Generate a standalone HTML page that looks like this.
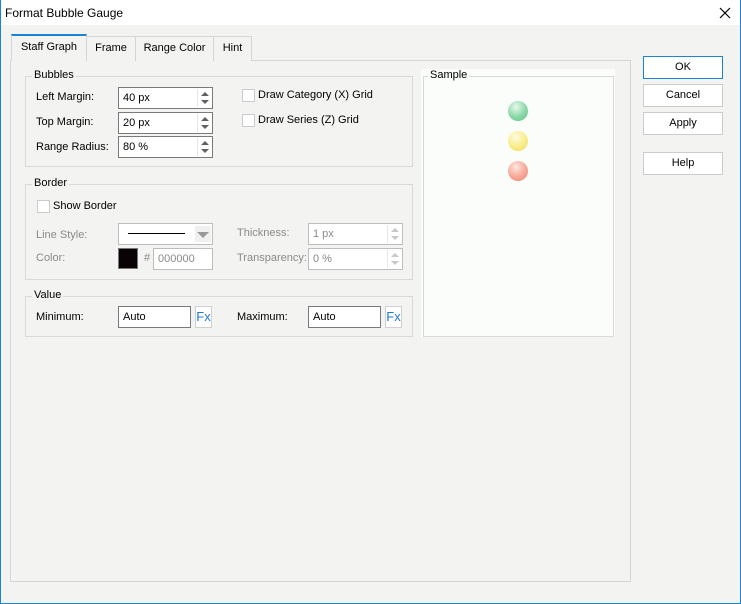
<!DOCTYPE html><html><head><style>
*{box-sizing:border-box}
body{margin:0;width:741px;height:604px;overflow:hidden;font-family:"Liberation Sans",sans-serif;font-size:11px;color:#000}
#win{position:absolute;left:0;top:0;width:741px;height:604px;background:#f3f4f2}
#bd{position:absolute;left:0;top:0;width:741px;height:604px;border:1px solid #1883d7;border-top:none}
.a{position:absolute}
.title{left:0;top:0;width:741px;height:25px;background:#fff}
.tab{position:absolute;top:36px;height:25px;border:1px solid #d6d6d6;border-bottom:none;background:#f3f4f2;text-align:center;line-height:23px}
.grp{position:absolute;border:1px solid #d9d9d9}
.grp>span{position:absolute;top:-8px;left:6px;background:#f3f4f2;padding:0 2px}
.in{position:absolute;height:22px;background:#fff;border:1px solid #7a7a7a;padding-left:4px;line-height:20px}
.dis{border-color:#bdbdbd;color:#8a8a8a}
.spin{position:absolute;right:1px;top:1px;width:14px;height:18px;border-left:1px solid #e6e6e6}
.spin:before,.spin:after{content:"";position:absolute;left:3px;border-left:4px solid transparent;border-right:4px solid transparent}
.spin:before{top:3px;border-bottom:4px solid #606060}
.spin:after{bottom:3px;border-top:4px solid #606060}
.dis .spin:before{border-bottom-color:#c8c8c8}.dis .spin:after{border-top-color:#c8c8c8}
.cb{position:absolute;width:13px;height:13px;border:1px solid #ccc;background:#fff}
.lbl{position:absolute}
.g{color:#8a8a8a}
.btn{position:absolute;left:643px;width:80px;height:23px;border:1px solid #cccccc;background:#fff;text-align:center;line-height:21px}
.fx{position:absolute;width:17px;height:22px;border:1px solid #d0d0d0;background:#fff;color:#1e78d8;font-size:13px;text-align:center;line-height:20px}
.ball{position:absolute;left:508px;width:20px;height:20px;border-radius:50%}
</style></head><body><div id="win">
<div class="a title"></div>
<div class="a" style="left:5px;top:6px;font-size:12px">Format Bubble Gauge</div>
<svg class="a" style="left:719px;top:7px" width="12" height="12"><path d="M1 1L11 11M11 1L1 11" stroke="#000" stroke-width="1.2"/></svg>
<div class="a" style="left:10px;top:60px;width:621px;height:522px;border:1px solid #d6d6d6;background:#f3f4f2"></div>
<div class="tab" style="left:86px;width:50px">Frame</div>
<div class="tab" style="left:135px;width:79px">Range Color</div>
<div class="tab" style="left:213px;width:39px">Hint</div>
<div class="tab" style="left:11px;top:34px;height:27px;width:76px;border-top:2px solid #1883d7;line-height:22px">Staff Graph</div>

<div class="grp" style="left:25px;top:76px;width:388px;height:91px"><span>Bubbles</span></div>
<div class="lbl" style="left:36px;top:91px">Left Margin:</div>
<div class="lbl" style="left:36px;top:116px">Top Margin:</div>
<div class="lbl" style="left:36px;top:141px">Range Radius:</div>
<div class="in" style="left:118px;top:87px;width:95px">40 px<div class="spin"></div></div>
<div class="in" style="left:118px;top:112px;width:95px">20 px<div class="spin"></div></div>
<div class="in" style="left:118px;top:136px;width:95px">80 %<div class="spin"></div></div>
<div class="cb" style="left:242px;top:89px"></div><div class="lbl" style="left:258px;top:89px">Draw Category (X) Grid</div>
<div class="cb" style="left:242px;top:114px"></div><div class="lbl" style="left:258px;top:114px">Draw Series (Z) Grid</div>

<div class="grp" style="left:25px;top:184px;width:388px;height:96px"><span>Border</span></div>
<div class="cb" style="left:37px;top:200px"></div><div class="lbl" style="left:53px;top:200px">Show Border</div>
<div class="lbl g" style="left:36px;top:229px">Line Style:</div>
<div class="lbl g" style="left:36px;top:252px">Color:</div>
<div class="in dis" style="left:118px;top:223px;width:95px"><div class="a" style="left:9px;top:9px;width:57px;height:1px;background:#000"></div><div class="a" style="left:76px;top:2px;width:16px;height:16px;background:#f0f0f0"></div><div class="a" style="left:78px;top:8px;border-left:6px solid transparent;border-right:6px solid transparent;border-top:6px solid #999"></div></div>
<div class="a" style="left:118px;top:248px;width:20px;height:21px;background:#0a0306;border:1px solid #777"></div>
<div class="lbl g" style="left:144px;top:252px">#</div>
<div class="in dis" style="left:153px;top:248px;width:60px">000000</div>
<div class="lbl g" style="left:237px;top:227px">Thickness:</div>
<div class="lbl g" style="left:237px;top:252px">Transparency:</div>
<div class="in dis" style="left:308px;top:223px;width:95px">1 px<div class="spin"></div></div>
<div class="in dis" style="left:308px;top:248px;width:95px">0 %<div class="spin"></div></div>

<div class="grp" style="left:25px;top:296px;width:388px;height:41px"><span>Value</span></div>
<div class="lbl" style="left:36px;top:311px">Minimum:</div>
<div class="in" style="left:118px;top:306px;width:73px">Auto</div>
<div class="fx" style="left:195px;top:306px">Fx</div>
<div class="lbl" style="left:237px;top:311px">Maximum:</div>
<div class="in" style="left:308px;top:306px;width:73px">Auto</div>
<div class="fx" style="left:385px;top:306px">Fx</div>

<div class="a" style="left:421px;top:69px;width:194px;height:268px;background:#fbfdfb"></div>
<div class="grp" style="left:423px;top:76px;width:191px;height:261px"><span style="background:#fbfdfb;left:4px">Sample</span></div>
<div class="ball" style="top:101px;background:radial-gradient(circle at 40% 30%,#e6f8ec,#8ad7a6 55%,#5cc487)"></div>
<div class="ball" style="top:131px;background:radial-gradient(circle at 40% 30%,#fffbe0,#f9ec88 55%,#f0da55)"></div>
<div class="ball" style="top:161px;background:radial-gradient(circle at 40% 30%,#ffe6e0,#f7a796 55%,#ef8670)"></div>

<div class="btn" style="top:56px;border-color:#1883d7">OK</div>
<div class="btn" style="top:84px">Cancel</div>
<div class="btn" style="top:112px">Apply</div>
<div class="btn" style="top:152px">Help</div>
<div id="bd"></div>
</div></body></html>
